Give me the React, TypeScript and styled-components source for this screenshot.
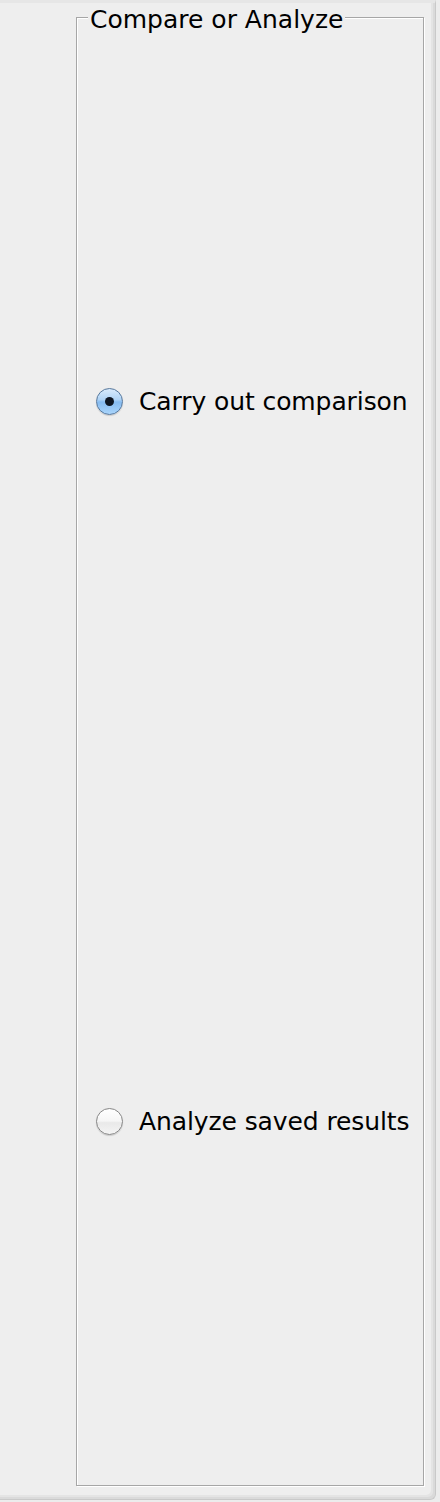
import React from "react";
import styled, { createGlobalStyle } from "styled-components";

const GlobalStyle = createGlobalStyle`
  html, body {
    margin: 0;
    padding: 0;
    background: #ececec;
  }
  body {
    font-family: "DejaVu Sans", "Liberation Sans", sans-serif;
    color: #000;
  }
`;

const Window = styled.div`
  box-sizing: border-box;
  width: 436px;
  height: 1500px;
  background: #eeeeee;
  border-top: 3px solid #e6e6e6;
  border-right: 1px solid #c9c9c9;
  border-bottom: 1px solid #c9c9c9;
  border-bottom-right-radius: 6px;
  box-shadow: inset -2px -2px 0 #dadada, inset -4px -4px 0 #e4e4e4;
  padding: 14px 0 0 76px;
`;

const Group = styled.section`
  position: relative;
  box-sizing: border-box;
  width: 348px;
  height: 1469px;
  border: 1px solid #a6a6a6;
  box-shadow: 1px 1px 0 #ffffff, inset 1px 1px 0 #ffffff;
  display: grid;
  grid-template-rows: 720px 720px;
  padding-top: 23px;
  padding-left: 19px;
`;

const Legend = styled.span`
  position: absolute;
  top: -13px;
  left: 11px;
  padding: 0 2px;
  background: #eeeeee;
  font-size: 25px;
  line-height: 29px;
  white-space: nowrap;
`;

const Option = styled.label`
  display: flex;
  align-items: center;
  gap: 16px;
  font-size: 25px;
  line-height: 29px;
  white-space: nowrap;
  letter-spacing: -0.1px;
`;

const Dot = styled.span<{ $checked: boolean }>`
  position: relative;
  box-sizing: border-box;
  flex: none;
  width: 27px;
  height: 27px;
  border-radius: 50%;
  border: 1.5px solid ${(p) => (p.$checked ? "#56779c" : "#868686")};
  background: ${(p) =>
    p.$checked
      ? "linear-gradient(to bottom, #d9ebfc 0%, #b0d4f6 42%, #86bbf0 52%, #aad5fb 100%)"
      : "linear-gradient(to bottom, #ffffff 0%, #f6f6f6 48%, #e9e9e9 55%, #f4f4f4 100%)"};
  box-shadow: 0 1px 1px rgba(0, 0, 0, 0.15);

  &::after {
    content: "";
    display: ${(p) => (p.$checked ? "block" : "none")};
    position: absolute;
    left: 50%;
    top: 50%;
    width: 9px;
    height: 9px;
    margin: -4.5px 0 0 -4.5px;
    border-radius: 50%;
    background: #0e1622;
  }
`;

export default function App() {
  return (
    <>
      <GlobalStyle />
      <Window>
        <Group>
          <Legend>Compare or Analyze</Legend>
          <Option>
            <Dot $checked={true} />
            Carry out comparison
          </Option>
          <Option>
            <Dot $checked={false} />
            Analyze saved results
          </Option>
        </Group>
      </Window>
    </>
  );
}
